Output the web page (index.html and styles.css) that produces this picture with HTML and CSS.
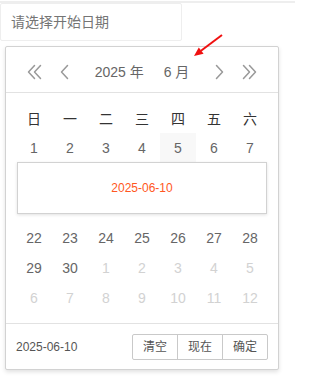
FILE: index.html
```html
<!DOCTYPE html>
<html lang="zh-CN">
<head>
<meta charset="utf-8">
<title>laydate</title>
<link rel="stylesheet" href="styles.css">
</head>
<body>
<div class="topline"></div>
<div class="date-input">请选择开始日期</div>
<div class="laydate">
  <div class="ld-header">
    <div class="ld-nav">
      <span class="ld-icon" title="上一年">
        <svg width="18" height="18" viewBox="0 0 18 18"><polyline points="8.5,2.5 2.5,9 8.5,15.5" /><polyline points="14.5,2.5 8.5,9 14.5,15.5" /></svg>
      </span>
      <span class="ld-icon" title="上一月">
        <svg width="18" height="18" viewBox="0 0 18 18"><polyline points="11.5,2.5 5.5,9 11.5,15.5" /></svg>
      </span>
    </div>
    <div class="ld-ym">
      <span class="ld-ym-item">2025 年</span>
      <span class="ld-ym-item">6 月</span>
    </div>
    <div class="ld-nav">
      <span class="ld-icon" title="下一月">
        <svg width="18" height="18" viewBox="0 0 18 18"><polyline points="6.5,2.5 12.5,9 6.5,15.5" /></svg>
      </span>
      <span class="ld-icon" title="下一年">
        <svg width="18" height="18" viewBox="0 0 18 18"><polyline points="3.5,2.5 9.5,9 3.5,15.5" /><polyline points="9.5,2.5 15.5,9 9.5,15.5" /></svg>
      </span>
    </div>
  </div>
  <div class="ld-content">
    <table class="ld-table">
      <thead>
        <tr><th>日</th><th>一</th><th>二</th><th>三</th><th>四</th><th>五</th><th>六</th></tr>
      </thead>
      <tbody>
        <tr><td>1</td><td>2</td><td>3</td><td>4</td><td class="hover">5</td><td>6</td><td>7</td></tr>
        <tr class="hint-row"><td colspan="7"><div class="ld-hint">2025-06-10</div></td></tr>
        <tr><td>22</td><td>23</td><td>24</td><td>25</td><td>26</td><td>27</td><td>28</td></tr>
        <tr><td>29</td><td>30</td><td class="next">1</td><td class="next">2</td><td class="next">3</td><td class="next">4</td><td class="next">5</td></tr>
        <tr><td class="next">6</td><td class="next">7</td><td class="next">8</td><td class="next">9</td><td class="next">10</td><td class="next">11</td><td class="next">12</td></tr>
      </tbody>
    </table>
  </div>
  <div class="ld-footer">
    <span class="ld-value">2025-06-10</span>
    <div class="ld-btns">
      <span class="ld-btn">清空</span><span class="ld-btn">现在</span><span class="ld-btn">确定</span>
    </div>
  </div>
</div>
<svg class="red-arrow" width="45" height="32" viewBox="0 0 45 32">
  <line x1="37" y1="5" x2="16" y2="20.8" />
  <polygon points="9,26 18.6,23.8 13.8,17.4" />
</svg>
</body>
</html>
```
FILE: styles.css
```css
* {
  box-sizing: border-box;
}

html, body {
  margin: 0;
  padding: 0;
  background: #fff;
}

body {
  font-family: "Liberation Sans", "Noto Sans CJK SC", Arial, sans-serif;
  font-size: 14px;
  color: #333;
  position: relative;
  width: 295px;
  height: 381px;
  overflow: hidden;
}

.topline {
  margin-top: 1px;
  height: 2px;
  background: #eeeeee;
}

.date-input {
  width: 182px;
  height: 38px;
  border: 1px solid #eeeeee;
  border-radius: 2px;
  padding-left: 10px;
  line-height: 36px;
  color: #757575;
  font-size: 14px;
}

.laydate {
  margin: 5px 0 0 5px;
  width: 274px;
  border: 1px solid #d2d2d2;
  border-radius: 2px;
  background: #fff;
  box-shadow: 0 2px 4px rgba(0, 0, 0, 0.12);
}

.ld-header {
  display: flex;
  align-items: center;
  height: 46px;
  padding: 10px 15px 5px;
  border-bottom: 1px solid #e2e2e2;
}

.ld-nav {
  display: flex;
  gap: 2px;
}

.ld-icon {
  display: flex;
  align-items: center;
  justify-content: center;
  width: 28px;
  height: 30px;
}

.ld-icon svg {
  fill: none;
  stroke: #999;
  stroke-width: 1.5;
  stroke-linecap: round;
  stroke-linejoin: round;
}

.ld-ym {
  flex: 1;
  display: flex;
  justify-content: center;
  line-height: 30px;
  color: #666;
  font-size: 14px;
}

.ld-ym-item {
  padding: 0 10px;
}

.ld-content {
  padding: 10px;
}

.ld-table {
  border-collapse: collapse;
  border-spacing: 0;
}

.ld-table th,
.ld-table td {
  width: 36px;
  height: 30px;
  padding: 0;
  text-align: center;
  font-size: 14px;
}

.ld-table th {
  font-weight: 400;
  color: #333;
}

.ld-table td {
  color: #666;
}

.ld-table td.hover {
  background: #f8f8f8;
}

.ld-table td.next {
  color: #d2d2d2;
}

.ld-table .hint-row td {
  height: 60px;
  vertical-align: top;
}

.ld-hint {
  margin: -1px 0 0 1px;
  width: 250px;
  height: 52px;
  border: 1px solid #d2d2d2;
  background: #fff;
  box-shadow: 0 1px 3px rgba(0, 0, 0, 0.12);
  display: flex;
  align-items: center;
  justify-content: center;
  color: #ff5722;
  font-size: 12px;
}

.ld-footer {
  display: flex;
  align-items: center;
  justify-content: space-between;
  border-top: 1px solid #e2e2e2;
  padding: 10px 10px 9px;
}

.ld-value {
  font-size: 12px;
  color: #555;
  line-height: 26px;
}

.ld-btns {
  display: flex;
}

.ld-btn {
  height: 26px;
  line-height: 24px;
  padding: 0 10px;
  border: 1px solid #c9c9c9;
  margin-left: -1px;
  font-size: 12px;
  color: #555;
  background: #fff;
}

.ld-btn:first-child {
  border-radius: 2px 0 0 2px;
}

.ld-btn:last-child {
  border-radius: 0 2px 2px 0;
}

.red-arrow {
  position: absolute;
  left: 185px;
  top: 30px;
}

.red-arrow line {
  stroke: #f01010;
  stroke-width: 2;
}

.red-arrow polygon {
  fill: #f01010;
}
```
